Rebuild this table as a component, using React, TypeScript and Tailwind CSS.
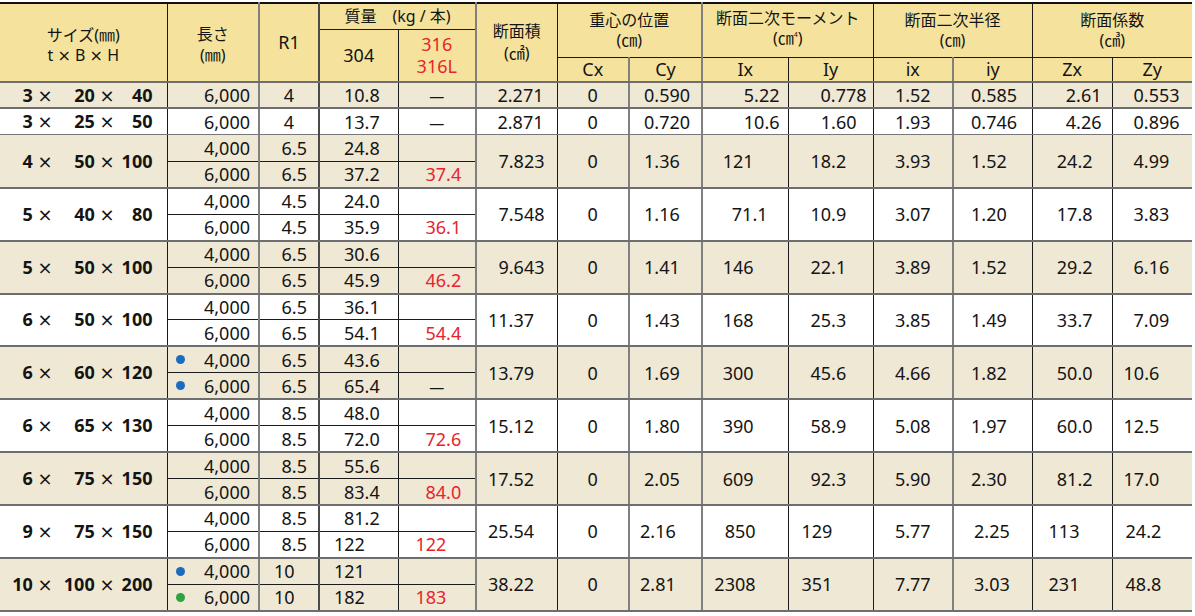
import React from 'react';

const V = [
  'border-r border-r-[#1a1a1a]',
  'border-r-2 border-r-[#808080]',
  'border-r-2 border-r-[#4a4a4a]',
  'border-r border-r-[#1a1a1a]',
  'border-r-2 border-r-[#808080]',
  'border-r border-r-[#1a1a1a]',
  'border-r-2 border-r-[#808080]',
  'border-r-2 border-r-[#808080]',
  'border-r border-r-[#1a1a1a]',
  'border-r border-r-[#1a1a1a]',
  'border-r-2 border-r-[#808080]',
  'border-r border-r-[#1a1a1a]',
  'border-r border-r-[#1a1a1a]',
  '',
];

const widths = ['w-[167px]', 'w-[92px]', 'w-[60px]', 'w-[79px]', 'w-[78px]', 'w-[81px]', 'w-[72px]', 'w-[73px]', 'w-[86px]', 'w-[85px]', 'w-[80px]', 'w-[79px]', 'w-[80px]', 'w-[80px]'];

const GB = 'border-b-2 border-b-[#6e6e6e]';
const SB = 'border-b border-b-[#1a1a1a]';
const HEAD = 'bg-[#f5e39d]';
const BEIGE = 'bg-[#efe8d5]';

type Cell = [string, string];
type Sub = { len: string; dot?: 'blue' | 'green'; r1: Cell; w304: Cell; w316: Cell };
type Group = {
  size: [string, string, string];
  subs: Sub[];
  rest: Cell[];
};

const C = 'text-center';
const dash: Cell = ['—', 'text-center'];
const none: Cell = ['', ''];
const r1a = (v: string): Cell => [v, 'text-right pr-[11px]'];
const w4 = (v: string): Cell => [v, 'text-left pl-[24px]'];
const red4 = (v: string): Cell => [v, 'text-left pl-[27px] text-[#e8232d]'];

const groups: Group[] = [
  {
    size: ['3', '20', '40'],
    subs: [{ len: '6,000', r1: ['4', C], w304: w4('10.8'), w316: dash }],
    rest: [['2.271', 'text-right pr-[13px]'], ['0', C], ['0.590', 'pl-[14px]'], ['5.22', 'text-right pr-[8px]'], ['0.778', 'text-right pr-[6px]'], ['1.52', C], ['0.585', 'pl-[17px]'], ['2.61', 'text-right pr-[10px]'], ['0.553', 'pl-[21px]']],
  },
  {
    size: ['3', '25', '50'],
    subs: [{ len: '6,000', r1: ['4', C], w304: w4('13.7'), w316: dash }],
    rest: [['2.871', 'text-right pr-[13px]'], ['0', C], ['0.720', 'pl-[14px]'], ['10.6', 'text-right pr-[8px]'], ['1.60', 'text-right pr-[16px]'], ['1.93', C], ['0.746', 'pl-[17px]'], ['4.26', 'text-right pr-[10px]'], ['0.896', 'pl-[21px]']],
  },
  {
    size: ['4', '50', '100'],
    subs: [
      { len: '4,000', r1: r1a('6.5'), w304: w4('24.8'), w316: none },
      { len: '6,000', r1: r1a('6.5'), w304: w4('37.2'), w316: red4('37.4') },
    ],
    rest: [['7.823', 'text-right pr-[12px]'], ['0', C], ['1.36', 'pl-[14px]'], ['121', 'text-right pr-[34px]'], ['18.2', 'pl-[22px]'], ['3.93', C], ['1.52', 'pl-[17px]'], ['24.2', 'text-right pr-[19px]'], ['4.99', 'pl-[21px]']],
  },
  {
    size: ['5', '40', '80'],
    subs: [
      { len: '4,000', r1: r1a('4.5'), w304: w4('24.0'), w316: none },
      { len: '6,000', r1: r1a('4.5'), w304: w4('35.9'), w316: red4('36.1') },
    ],
    rest: [['7.548', 'text-right pr-[12px]'], ['0', C], ['1.16', 'pl-[14px]'], ['71.1', 'text-right pr-[20px]'], ['10.9', 'pl-[22px]'], ['3.07', C], ['1.20', 'pl-[17px]'], ['17.8', 'text-right pr-[19px]'], ['3.83', 'pl-[21px]']],
  },
  {
    size: ['5', '50', '100'],
    subs: [
      { len: '4,000', r1: r1a('6.5'), w304: w4('30.6'), w316: none },
      { len: '6,000', r1: r1a('6.5'), w304: w4('45.9'), w316: red4('46.2') },
    ],
    rest: [['9.643', 'text-right pr-[12px]'], ['0', C], ['1.41', 'pl-[14px]'], ['146', 'text-right pr-[34px]'], ['22.1', 'pl-[22px]'], ['3.89', C], ['1.52', 'pl-[17px]'], ['29.2', 'text-right pr-[19px]'], ['6.16', 'pl-[21px]']],
  },
  {
    size: ['6', '50', '100'],
    subs: [
      { len: '4,000', r1: r1a('6.5'), w304: w4('36.1'), w316: none },
      { len: '6,000', r1: r1a('6.5'), w304: w4('54.1'), w316: red4('54.4') },
    ],
    rest: [['11.37', 'pl-[11px]'], ['0', C], ['1.43', 'pl-[14px]'], ['168', 'text-right pr-[34px]'], ['25.3', 'pl-[22px]'], ['3.85', C], ['1.49', 'pl-[17px]'], ['33.7', 'text-right pr-[19px]'], ['7.09', 'pl-[21px]']],
  },
  {
    size: ['6', '60', '120'],
    subs: [
      { len: '4,000', dot: 'blue', r1: r1a('6.5'), w304: w4('43.6'), w316: none },
      { len: '6,000', dot: 'blue', r1: r1a('6.5'), w304: w4('65.4'), w316: dash },
    ],
    rest: [['13.79', 'pl-[11px]'], ['0', C], ['1.69', 'pl-[14px]'], ['300', 'text-right pr-[34px]'], ['45.6', 'pl-[22px]'], ['4.66', C], ['1.82', 'pl-[17px]'], ['50.0', 'text-right pr-[19px]'], ['10.6', 'pl-[11px]']],
  },
  {
    size: ['6', '65', '130'],
    subs: [
      { len: '4,000', r1: r1a('8.5'), w304: w4('48.0'), w316: none },
      { len: '6,000', r1: r1a('8.5'), w304: w4('72.0'), w316: red4('72.6') },
    ],
    rest: [['15.12', 'pl-[11px]'], ['0', C], ['1.80', 'pl-[14px]'], ['390', 'text-right pr-[34px]'], ['58.9', 'pl-[22px]'], ['5.08', C], ['1.97', 'pl-[17px]'], ['60.0', 'text-right pr-[19px]'], ['12.5', 'pl-[11px]']],
  },
  {
    size: ['6', '75', '150'],
    subs: [
      { len: '4,000', r1: r1a('8.5'), w304: w4('55.6'), w316: none },
      { len: '6,000', r1: r1a('8.5'), w304: w4('83.4'), w316: red4('84.0') },
    ],
    rest: [['17.52', 'pl-[11px]'], ['0', C], ['2.05', 'pl-[14px]'], ['609', 'text-right pr-[34px]'], ['92.3', 'pl-[22px]'], ['5.90', C], ['2.30', 'pl-[17px]'], ['81.2', 'text-right pr-[19px]'], ['17.0', 'pl-[11px]']],
  },
  {
    size: ['9', '75', '150'],
    subs: [
      { len: '4,000', r1: r1a('8.5'), w304: w4('81.2'), w316: none },
      { len: '6,000', r1: r1a('8.5'), w304: ['122', 'pl-[14px]'], w316: ['122', 'pl-[17px] text-[#e8232d]'] },
    ],
    rest: [['25.54', 'pl-[11px]'], ['0', C], ['2.16', 'pl-[10px]'], ['850', 'text-right pr-[32px]'], ['129', 'pl-[13px]'], ['5.77', C], ['2.25', 'pl-[20px]'], ['113', 'pl-[16px]'], ['24.2', 'pl-[13px]']],
  },
  {
    size: ['10', '100', '200'],
    subs: [
      { len: '4,000', dot: 'blue', r1: ['10', 'pl-[14px]'], w304: ['121', 'pl-[14px]'], w316: none },
      { len: '6,000', dot: 'green', r1: ['10', 'pl-[14px]'], w304: ['182', 'pl-[14px]'], w316: ['183', 'pl-[17px] text-[#e8232d]'] },
    ],
    rest: [['38.22', 'pl-[11px]'], ['0', C], ['2.81', 'pl-[10px]'], ['2308', 'text-right pr-[32px]'], ['351', 'pl-[13px]'], ['7.77', C], ['3.03', 'pl-[20px]'], ['231', 'pl-[16px]'], ['48.8', 'pl-[13px]']],
  },
];

// the print's multiplication sign is wider and lighter than the bold digits
const X = () => <span className="font-['DejaVu_Sans',sans-serif] font-normal">×</span>;

function Size({ parts }: { parts: [string, string, string] }) {
  return (
    <div className="flex justify-end pr-[14px] font-bold">
      <span className="flex-1 text-right whitespace-pre">
        {parts[0] + ' '}
        <X />
      </span>
      <span className="w-[62px] text-right whitespace-pre">
        {parts[1] + ' '}
        <X />
      </span>
      <span className="w-[38px] text-right">{parts[2]}</span>
    </div>
  );
}

function Len({ s }: { s: Sub }) {
  return (
    <div className="flex items-center justify-between pl-[8px] pr-[8px]">
      {s.dot ? (
        <span className={`inline-block w-[9px] h-[9px] rounded-full ${s.dot === 'blue' ? 'bg-[#1a6cc0]' : 'bg-[#2fa43c]'}`} />
      ) : (
        <span />
      )}
      <span>{s.len}</span>
    </div>
  );
}

function Unit({ sup }: { sup?: string }) {
  return (
    <span>
      (㎝{sup ? <span className="relative -top-[7px] text-[7px]">{sup}</span> : null})
    </span>
  );
}

export default function App() {
  return (
    <div className="bg-white w-[1195px] h-[616px] overflow-hidden text-[#141414] font-['Noto_Sans','Noto_Sans_CJK_JP',sans-serif]">
      <table className="table-fixed border-collapse w-[1192px] mt-[2px] border-t-2 border-t-[#111] border-b-2 border-b-[#333]">
        <colgroup>
          {widths.map((w, i) => (
            <col key={i} className={w} />
          ))}
        </colgroup>
        <thead>
          <tr className="h-[26px]">
            <th rowSpan={3} className={`${HEAD} ${V[0]} ${GB} font-normal text-[16px] leading-[20px] p-0 pt-[6px]`}>
              サイズ(㎜)
              <br />
              t <X /> B <X /> H
            </th>
            <th rowSpan={3} className={`${HEAD} ${V[1]} ${GB} font-normal text-[16px] leading-[21px] p-0 pt-[5px]`}>
              長さ
              <br />
              (㎜)
            </th>
            <th rowSpan={3} className={`${HEAD} ${V[2]} ${GB} font-normal text-[18px] p-0`}>R1</th>
            <th colSpan={2} className={`${HEAD} ${V[4]} ${SB} font-normal text-[16px] leading-none p-0`}>
              質量　(kg / 本)
            </th>
            <th rowSpan={3} className={`${HEAD} ${V[5]} ${GB} font-normal text-[16px] leading-[22px] p-0 pb-[2px]`}>
              断面積
              <br />
              (㎠)
            </th>
            <th colSpan={2} rowSpan={2} className={`${HEAD} ${V[7]} ${SB} font-normal text-[16px] leading-[20px] p-0`}>
              重心の位置
              <br />
              <Unit />
            </th>
            <th colSpan={2} rowSpan={2} className={`${HEAD} ${V[9]} ${SB} font-normal text-[16px] leading-[20px] p-0`}>
              断面二次モーメント
              <br />
              <Unit sup="4" />
            </th>
            <th colSpan={2} rowSpan={2} className={`${HEAD} ${V[11]} ${SB} font-normal text-[16px] leading-[20px] p-0`}>
              断面二次半径
              <br />
              <Unit />
            </th>
            <th colSpan={2} rowSpan={2} className={`${HEAD} ${SB} font-normal text-[16px] leading-[20px] p-0`}>
              断面係数
              <br />
              (㎤)
            </th>
          </tr>
          <tr className="h-[28px]">
            <th rowSpan={2} className={`${HEAD} ${V[3]} ${GB} font-normal text-[18px] p-0`}>304</th>
            <th rowSpan={2} className={`${HEAD} ${V[4]} ${GB} font-normal text-[18px] leading-[22px] text-[#e8232d] p-0`}>
              316
              <br />
              316L
            </th>
          </tr>
          <tr className="h-[25px]">
            {['Cx', 'Cy', 'Ix', 'Iy', 'ix', 'iy', 'Zx', 'Zy'].map((t, i) => (
              <th key={t} className={`${HEAD} ${V[6 + i]} ${GB} font-normal text-[18px] leading-none p-0`}>
                {t}
              </th>
            ))}
          </tr>
        </thead>
        <tbody className="text-[18px] leading-none">
          {groups.map((g, gi) => {
            const bg = gi % 2 === 0 ? BEIGE : 'bg-white';
            const n = g.subs.length;
            const lastB = gi === 1 ? 'border-b border-b-[#777]' : GB;
            return g.subs.map((s, si) => {
              const b = si === n - 1 ? lastB : SB;
              return (
                <tr key={`${gi}-${si}`} className={`h-[26.45px] ${bg}`}>
                  {si === 0 && (
                    <td rowSpan={n} className={`${V[0]} ${lastB} p-0`}>
                      <Size parts={g.size} />
                    </td>
                  )}
                  <td className={`${V[1]} ${b} p-0`}>
                    <Len s={s} />
                  </td>
                  <td className={`${V[2]} ${b} p-0 ${s.r1[1]}`}>{s.r1[0]}</td>
                  <td className={`${V[3]} ${b} p-0 ${s.w304[1]}`}>{s.w304[0]}</td>
                  <td className={`${V[4]} ${b} p-0 ${s.w316[1]}`}>
                    {s.w316[0] === '—' ? <span className="text-[15px]">—</span> : s.w316[0]}
                  </td>
                  {si === 0 &&
                    g.rest.map((c, ci) => (
                      <td key={ci} rowSpan={n} className={`${V[5 + ci]} ${lastB} p-0 ${c[1]}`}>
                        {c[0]}
                      </td>
                    ))}
                </tr>
              );
            });
          })}
        </tbody>
      </table>
    </div>
  );
}
